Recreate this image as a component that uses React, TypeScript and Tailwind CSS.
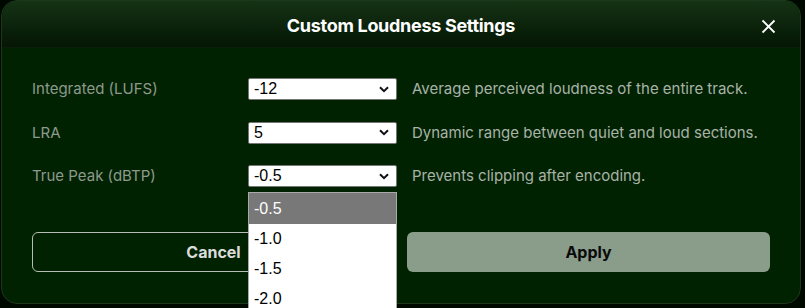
import React from "react";

const rows = [
  { label: "Integrated (LUFS)", value: "-12", help: "Average perceived loudness of the entire track." },
  { label: "LRA", value: "5", help: "Dynamic range between quiet and loud sections." },
  { label: "True Peak (dBTP)", value: "-0.5", help: "Prevents clipping after encoding." },
];

const peakOptions = ["-0.5", "-1.0", "-1.5", "-2.0", "-2.5"];

const Chevron = () => (
  <svg width="10" height="7" viewBox="0 0 10 7" className="shrink-0">
    <polyline points="1,1.2 5,5.2 9,1.2" fill="none" stroke="#111" strokeWidth="2" />
  </svg>
);

const FakeSelect = ({ value, open }: { value: string; open?: boolean }) => {
  return (
    <div className="relative h-[22px]">
      <div className="flex h-full items-center justify-between rounded-[2px] border border-[#767676] bg-white pl-[5px] pr-[7px] font-['Liberation_Sans',Arial,sans-serif] text-[16px] leading-none text-black">
        <span>{value}</span>
        <Chevron />
      </div>
      {open && (
        <div className="absolute left-0 top-[27px] z-10 w-full border border-[#a9a9a9] bg-white font-['Liberation_Sans',Arial,sans-serif] text-[16px] text-black">
          {peakOptions.map((o, i) => (
            <div
              key={o}
              className={
                i === 0
                  ? "flex h-[31px] items-center bg-[#787878] px-[5px] text-white"
                  : "flex h-[30px] items-center px-[5px]"
              }
            >
              {o}
            </div>
          ))}
        </div>
      )}
    </div>
  );
};

export default function App() {
  return (
    <div className="relative h-[308px] w-[805px] overflow-hidden bg-[#000900] font-['Inter',sans-serif]">
      <div className="ml-[1px] flex h-[304px] w-[800px] flex-col rounded-2xl border border-[#1d361d] bg-[#012201]">
        {/* header */}
        <div className="relative flex h-[47px] shrink-0 items-center justify-center rounded-t-2xl border-b border-[#0a1e0a] bg-gradient-to-b from-[#153315] to-[#051605] pt-[3px]">
          <h2 className="text-[18px] font-bold tracking-[-0.3px] text-white">Custom Loudness Settings</h2>
          <button className="absolute right-[24px] top-[18px]">
            <svg width="15" height="15" viewBox="0 0 15 15">
              <path d="M1.5 1.5 L13.5 13.5 M13.5 1.5 L1.5 13.5" stroke="#fff" strokeWidth="1.8" />
            </svg>
          </button>
        </div>

        {/* body */}
        <div className="px-[30px] pt-[30px]">
          <div className="grid grid-cols-[201px_149px_1fr] items-center gap-x-[15px] gap-y-[21px]">
            {rows.map((r, i) => (
              <React.Fragment key={r.label}>
                <span className="text-[15px] text-[#8d9a8d]">{r.label}</span>
                <FakeSelect value={r.value} open={i === 2} />
                <span className="whitespace-nowrap text-[15px] text-[#a9b2a9]">{r.help}</span>
              </React.Fragment>
            ))}
          </div>

          <div className="mt-[44px] grid h-[40px] grid-cols-2 gap-[12px]">
            <button className="rounded-md border border-[#b4bcb4] text-[16px] font-bold text-[#dcdcdc]">Cancel</button>
            <button className="rounded-md bg-[#8a9c8a] text-[16px] font-bold text-[#0a0a0a]">Apply</button>
          </div>
        </div>
      </div>
    </div>
  );
}
